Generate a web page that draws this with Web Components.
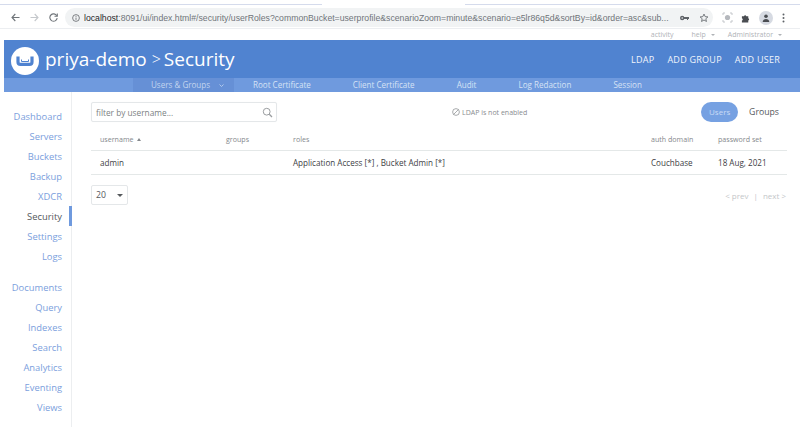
<!DOCTYPE html>
<html><head><meta charset="utf-8"><style>
html,body{margin:0;padding:0;background:#fff;width:800px;height:427px;overflow:hidden;font-family:"Open Sans",sans-serif}
</style></head><body>
<browser-bar></browser-bar>
<top-links></top-links>
<app-header></app-header>
<sub-nav></sub-nav>
<main-area></main-area>
<script>
function def(name,css,html){customElements.define(name,class extends HTMLElement{constructor(){super();this.attachShadow({mode:'open'}).innerHTML='<style>'+css+'</style>'+html;}});}
def('browser-bar',`
:host{display:block;height:29px;box-sizing:border-box;border-bottom:1px solid #eceef1;font-family:"Liberation Sans",sans-serif}
.tabs{display:flex;justify-content:space-between;height:5px;box-sizing:border-box}
.tabs i{display:block;height:1px;margin-top:4px;background:#d5dbec}
.tabs i:first-child{width:322px}.tabs i:last-child{width:335px}
.bar{display:flex;align-items:center;height:19px;margin-top:3px;padding-left:11px}
.nav{display:flex;gap:10px;align-items:center;width:54px}
svg{display:block;flex:none}
.omni{width:648px;height:19px;background:#f1f3f4;border-radius:10px;display:flex;align-items:center;box-sizing:border-box;padding:0 4px 0 7px;font-size:8.700px;color:#70757a;white-space:nowrap;overflow:hidden}
.omni b{font-weight:400;color:#26282b}
.url{margin-left:4px;width:590px;overflow:hidden}
.omni .r{display:flex;gap:10px;align-items:center;margin-left:7px}
.ext{display:flex;align-items:center;gap:8px;margin-left:9px}
.av{width:14px;height:14px;border-radius:50%;background:#d6dae2;display:flex;align-items:center;justify-content:center}
.dots{margin-left:1px}
`,`<div class="tabs"><i></i><i></i></div>
<div class="bar"><div class="nav">
<svg width="9" height="9" viewBox="0 0 9 9" fill="none" stroke="#70757a" stroke-width="1.100"><path d="M8.500 4.500H1M4.300 1 1 4.500 4.300 8"/></svg>
<svg width="9" height="9" viewBox="0 0 9 9" fill="none" stroke="#c5c8cc" stroke-width="1.100"><path d="M.5 4.500H8M4.700 1 8 4.500 4.700 8"/></svg>
<svg width="9" height="9" viewBox="0 0 9 9" fill="none" stroke="#70757a" stroke-width="1.100"><path d="M7.800 2.800A3.700 3.700 0 1 0 8.200 5.200"/><path d="M8.300 .5v2.800H5.500"/></svg>
</div>
<div class="omni"><svg width="8" height="8" viewBox="0 0 9 9" fill="none" stroke="#5f6368"><circle cx="4.500" cy="4.500" r="3.800" stroke-width=".9"/><path d="M4.500 4v2.600M4.500 2.200v1" stroke-width=".9"/></svg>
<span class="url"><b>localhost</b>:8091/ui/index.html#/security/userRoles?commonBucket=userprofile&amp;scenarioZoom=minute&amp;scenario=e5lr86q5d&amp;sortBy=id&amp;order=asc&amp;sub...</span>
<span class="r"><svg width="9" height="6" viewBox="0 0 9 6" fill="#5f6368"><circle cx="2.200" cy="3" r="2.200"/><path d="M4 2h5v2H8v1H7V4H4z"/><circle cx="2.200" cy="3" r=".8" fill="#f1f3f4"/></svg>
<svg width="10" height="10" viewBox="0 0 11 11" fill="none" stroke="#5f6368" stroke-width=".9"><path d="M5.500 1.200 6.800 4l3 .3-2.300 2 .7 3-2.700-1.600L2.800 9.300l.7-3-2.300-2 3-.3z"/></svg></span></div>
<div class="ext">
<svg width="11" height="11" viewBox="0 0 11 11" fill="none" stroke="#c3c6ca"><path d="M1 3V1h2M8 1h2v2M10 8v2H8M3 10H1V8"/><circle cx="5.500" cy="5.500" r="2.600" fill="#b5b8bd" stroke="none"/></svg>
<svg width="10" height="10" viewBox="0 0 11 11" fill="#4a4d52"><path d="M1 3.500h2.300a1.300 1.300 0 0 1 2.500 0H8v2.200a1.300 1.300 0 0 1 0 2.500V10.500H1V8.300a1.300 1.300 0 0 0 0-2.500z"/></svg>
<span class="av"><svg width="8" height="8" viewBox="0 0 8 8" fill="#4a4d52"><circle cx="4" cy="2.300" r="1.800"/><path d="M.7 8c0-2 1.500-3 3.300-3s3.300 1 3.300 3z"/></svg></span>
<svg class="dots" width="3" height="10" viewBox="0 0 3 10" fill="#5f6368"><circle cx="1.500" cy="1.500" r="1"/><circle cx="1.500" cy="5" r="1"/><circle cx="1.500" cy="8.500" r="1"/></svg>
</div></div>`);
def('top-links',`
:host{display:flex;justify-content:flex-end;align-items:center;height:11px;font-size:7px;color:#b0b3b7;padding-right:18px;font-family:"Open Sans",sans-serif}
span{white-space:nowrap}
.a{margin-right:18px}.b{margin-right:13px}
.c::after,.b::after{content:"";display:inline-block;border:2px solid transparent;border-top:2.500px solid #b0b3b7;border-bottom:0;margin-left:5px;vertical-align:middle}
`,`<span class="a">activity</span><span class="b">help</span><span class="c">Administrator</span>`);
def('app-header',`
:host{display:flex;align-items:center;height:38px;margin-left:4px;background:#5083d0;color:#fff;box-sizing:border-box;padding:0 20px 0 7px}
.logo{width:28px;height:28px;border-radius:50%;background:#fff;display:flex;align-items:center;justify-content:center;flex:none;margin-top:3px}
h1{margin:0 0 0 6px;font-weight:400;font-size:19px;line-height:38px;white-space:nowrap;flex:1;display:flex;align-items:center}
h1 span{font-size:16px;font-weight:300;margin:0 3px 0 5px}
nav{display:flex;gap:13px;font-size:9px;letter-spacing:.25px;color:#f1f5fc}
`,`<div class="logo"><svg width="18" height="10" viewBox="0 0 18 10" fill="none"><path d="M2 0v5.500A2.500 2.500 0 0 0 4.500 8h9A2.500 2.500 0 0 0 16 5.500V0" stroke="#5083d0" stroke-width="3.200" transform="translate(0 .4)"/><path d="M5.500 3.500v2h7v-2" stroke="#5083d0" stroke-width="1"/></svg></div>
<h1>priya-demo<span>&gt;</span>Security</h1><nav><span>LDAP</span><span>ADD GROUP</span><span>ADD USER</span></nav>`);
def('sub-nav',`
:host{display:flex;height:14px;margin-left:4px;background:#6f9ade;color:#d6e2f5;font-size:8.050px;line-height:14px;white-space:nowrap;padding-left:129px}
span{display:block}
.on{width:101px;box-sizing:border-box;padding-left:18px;background:#6690d6;color:#c3d5ef;margin-right:19px;display:flex;align-items:center}
.on svg{margin-left:9px}
.x{margin-right:42px}
`,`<span class="on">Users &amp; Groups<svg width="5" height="3" viewBox="0 0 5 3" fill="none" stroke="#c3d5ef" stroke-width=".8"><path d="M.5.5 2.500 2.500 4.500.5"/></svg></span><span class="x">Root Certificate</span><span class="x">Client Certificate</span><span class="x">Audit</span><span class="x">Log Redaction</span><span>Session</span>`);
def('side-nav',`
:host{display:block;width:71px;flex:none;border-right:1px solid #eceef0;padding-top:14.500px;height:320.500px;font-size:9.400px;text-align:right;color:#7ba0dd}
div{height:20.150px;line-height:20px;padding-right:9px;position:relative}
.g{margin-top:10px}
.on{color:#55585c}
.on::after{content:"";position:absolute;right:-1px;top:-1px;width:3px;height:20px;background:#6f9ade}
`,['Dashboard','Servers','Buckets','Backup','XDCR','Security','Settings','Logs','Documents','Query','Indexes','Search','Analytics','Eventing','Views'].map(t=>`<div class="${t=='Security'?'on':t=='Documents'?'g':''}">${t}</div>`).join(''));
def('user-table',`
:host{display:block;font-size:8.100px;color:#3d4043}
.row{display:grid;grid-template-columns:126px 67px 358px 67px 1fr;padding-left:9px;align-items:center;box-sizing:border-box}
.h{height:29px;padding-top:5px;color:#85888c;font-size:7.100px;border-bottom:1px solid #e4e8e8}
.d{height:24px;border-bottom:1px solid #e4e8e8}
.h span:first-child::after{content:"";display:inline-block;border:2px solid transparent;border-bottom:3px solid #85888c;border-top:0;margin-left:4px;vertical-align:middle}
`,`<div class="row h"><span>username</span><span>groups</span><span>roles</span><span>auth domain</span><span>password set</span></div>
<div class="row d"><span>admin</span><span></span><span>Application Access [*] , Bucket Admin [*]</span><span>Couchbase</span><span>18 Aug, 2021</span></div>`);
def('main-area',`
:host{display:flex}
.c{width:696px;margin-left:19px;padding-top:10px}
.top{display:flex;align-items:center;height:20px}
.f{width:186px;height:20px;box-sizing:border-box;border:1px solid #e4e7e9;border-radius:2px;display:flex;align-items:center;justify-content:space-between;padding:0 3px 0 4px;font-size:8.300px;color:#7c7f83;box-shadow:0 0 1px #eef0f2}
.l{margin-left:175px;display:flex;align-items:center;gap:2px;font-size:7px;color:#8a8c8f}
.t{margin-left:auto;display:flex;align-items:center;gap:11px;font-size:8.700px;color:#55585c;margin-right:8px}
.u{background:#76a1e2;color:#c9dbf5;border-radius:10px;height:20px;line-height:20px;width:37px;text-align:center;font-size:8px}
.p{display:flex;justify-content:space-between;align-items:center;margin-top:10px}
.s{width:37px;height:20px;box-sizing:border-box;border:1px solid #e4e7e9;border-radius:2px;font-size:8.700px;color:#55585c;display:flex;align-items:center;justify-content:space-between;padding:0 4px}
.s::after{content:"";border:3px solid transparent;border-top:3.500px solid #55585c;border-bottom:0}
.n{font-size:8px;color:#c4c6c9;margin-right:1px}
.n i{font-style:normal;margin:0 5px}
`,`<side-nav></side-nav><div class="c"><div class="top"><div class="f"><span>filter by username...</span><svg width="11" height="11" viewBox="0 0 11 11" fill="none" stroke="#9a9da0"><circle cx="4.700" cy="4.700" r="3.400"/><path d="M7.300 7.300 10 10" stroke-width="1.300"/></svg></div>
<div class="l"><svg width="8" height="8" viewBox="0 0 9 9" fill="none" stroke="#85888c" stroke-width=".8"><circle cx="4.500" cy="4.500" r="3.800"/><path d="M1.900 7.100 7.100 1.900"/></svg><span>LDAP is not enabled</span></div>
<div class="t"><span class="u">Users</span><span>Groups</span></div></div>
<user-table></user-table>
<div class="p"><div class="s">20</div><div class="n">&lt; prev<i>|</i>next &gt;</div></div></div>`);
</script>
</body></html>
